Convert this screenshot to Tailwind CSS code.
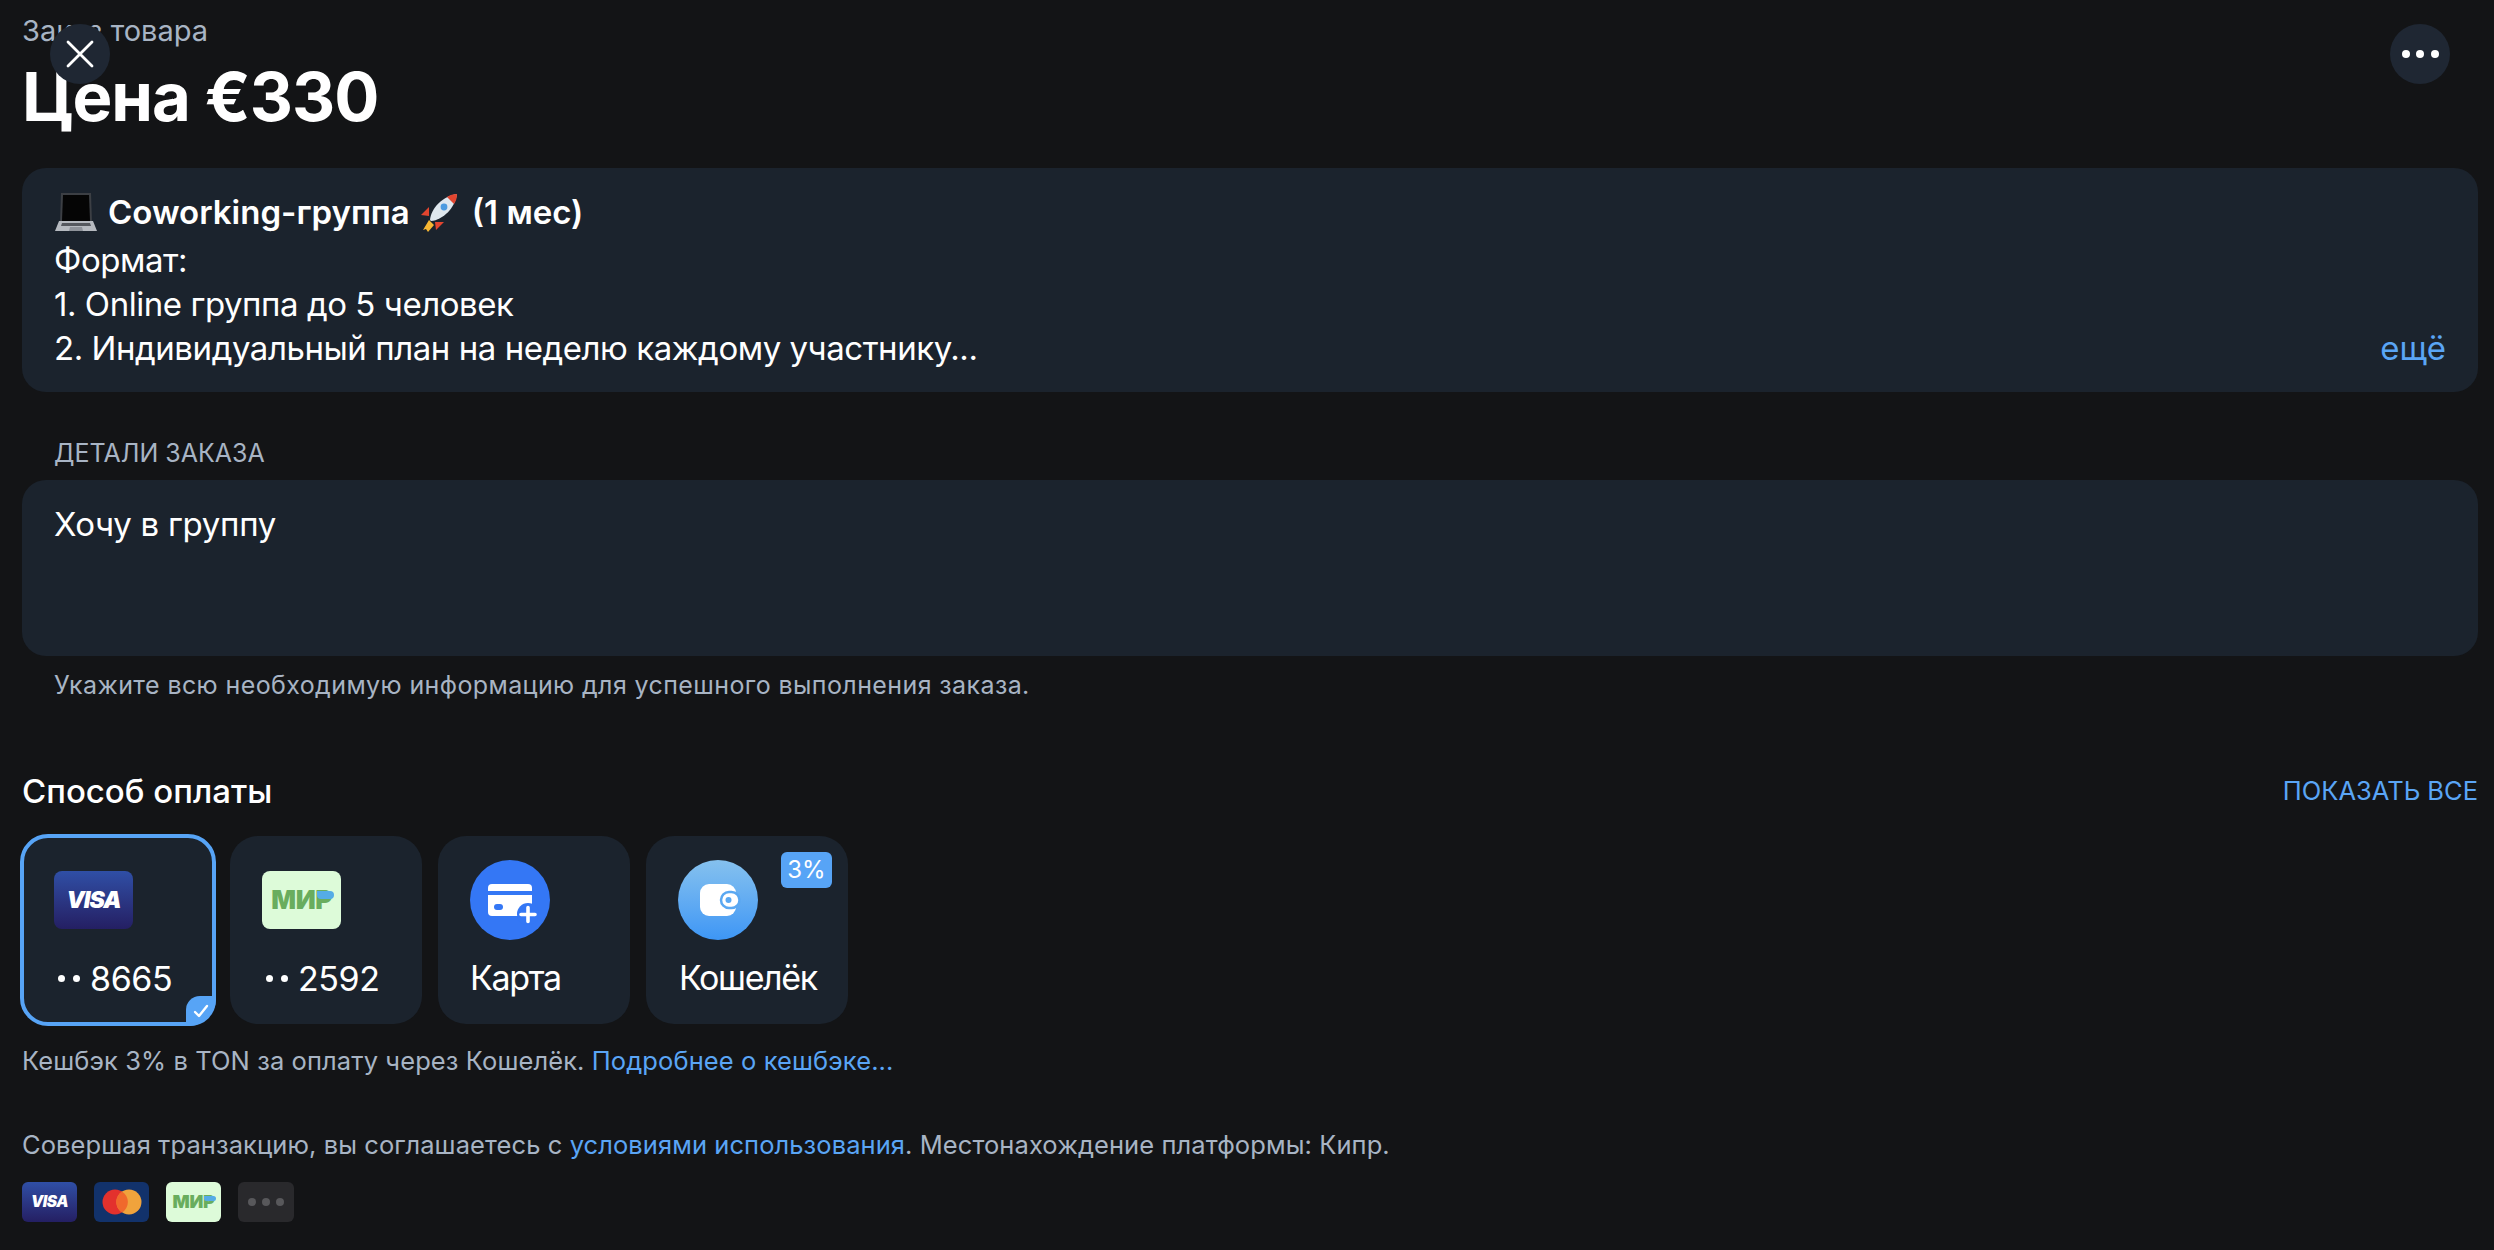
<!DOCTYPE html>
<html lang="ru">
<head>
<meta charset="utf-8">
<script src="https://cdn.jsdelivr.net/npm/@tailwindcss/browser@4"></script>
<title>Заказ товара</title>
</head>
<body class="bg-[#131416] font-['Inter','Noto_Sans',sans-serif] text-white overflow-hidden">
<div class="relative h-[1250px] w-[2494px] pl-[22px] pr-[16px]">
  <button class="absolute left-[50px] top-[24px] flex h-[60px] w-[60px] items-center justify-center rounded-full bg-[#1f2733]">
    <svg width="30" height="30" viewBox="0 0 30 30" fill="none" stroke="white" stroke-width="2.8" stroke-linecap="round"><path d="M3 3 27 27M27 3 3 27"/></svg>
  </button>
  <button class="absolute left-[2390px] top-[24px] flex h-[60px] w-[60px] items-center justify-center gap-[6.5px] rounded-full bg-[#1f2733]">
    <span class="h-[8px] w-[8px] rounded-full bg-white"></span><span class="h-[8px] w-[8px] rounded-full bg-white"></span><span class="h-[8px] w-[8px] rounded-full bg-white"></span>
  </button>

  <div class="pt-[13px] text-[29px] leading-[36px] text-[#a8b4c4]">Заказ товара</div>
  <h1 class="mt-[11px] text-[67px] leading-[74px] font-bold tracking-[-1px]">Цена €330</h1>

  <section class="mt-[34px] flex h-[224px] items-end justify-between rounded-[24px] bg-[#1b232d] px-[32px] pb-[22px] pt-[22px]">
    <div class="text-[33px] leading-[44px] tracking-[-0.45px]">
      <div class="flex h-[44px] items-center gap-[10px] font-semibold tracking-normal">
        <svg width="44" height="42" viewBox="0 0 44 42"><path d="M7 2h30l1 30H6z" fill="#3c3f44"/><path d="M9 4h26l1 26H8z" fill="#050505"/><path d="M5 30h34l4 10H1z" fill="#b6bac0"/><path d="M8 32h28l1 3H7z" fill="#55585e"/><path d="M16 36h12l1 4H15z" fill="#8f939a"/></svg>
        <span>Coworking-группа</span>
        <svg class="ml-[-2px]" width="42" height="42" viewBox="0 0 42 42"><path d="M11 29 5 39l3-1 2 3 6-7z" fill="#f7b733"/><path d="M11 16 3 24l8 1zM26 31l-8 8-1-8z" fill="#e2452f"/><path d="M12 29C13 17 25 5 39 3c-2 14-14 26-26 27z" fill="#dfe7ee"/><path d="M39 3c-4 0-7 1-10 3l7 7c2-3 3-6 3-10z" fill="#e2452f"/><circle cx="26" cy="16" r="3.4" fill="#4d9be0"/></svg>
        <span class="ml-[2px]">(1 мес)</span>
      </div>
      <div class="mt-[4px]">Формат:</div>
      <div>1. Online группа до 5 человек</div>
      <div>2. Индивидуальный план на неделю каждому участнику...</div>
    </div>
    <span class="text-[33px] leading-[44px] text-[#5aa5f5]">ещё</span>
  </section>

  <div class="mt-[43px] pl-[32px] text-[25px] leading-[36px] text-[#a8b4c4]">ДЕТАЛИ ЗАКАЗА</div>
  <section class="mt-[9px] h-[176px] rounded-[24px] bg-[#1b232d] px-[32px] pt-[22px] text-[33px] leading-[44px] tracking-[-0.3px]">Хочу в группу</section>
  <p class="mt-[12px] pl-[32px] text-[25px] leading-[34px] tracking-[0.4px] text-[#a8b4c4]">Укажите всю необходимую информацию для успешного выполнения заказа.</p>

  <div class="mt-[67px] flex items-center justify-between">
    <h2 class="text-[33px] leading-[44px] font-medium">Способ оплаты</h2>
    <span class="text-[25.500px] leading-[44px] text-[#5aa5f5]">ПОКАЗАТЬ ВСЕ</span>
  </div>

  <div class="ml-[-2px] mt-[21px] flex items-center gap-[16px]">
    <div class="relative mr-[-2px] flex h-[192px] w-[196px] shrink-0 flex-col rounded-[28px] border-[4px] border-[#57a4f6] bg-[#1b232d] pl-[30px]">
      <div class="mt-[33px] flex h-[58px] w-[79px] items-center justify-center rounded-[8px] bg-linear-to-b from-[#2f4fa6] to-[#241f63]"><span class="text-[23px] leading-none font-black italic tracking-[-1px]">VISA</span></div>
      <div class="mt-[27px] flex h-[44px] items-center text-[34px] tracking-[-0.4px]"><span class="ml-[4px] h-[7px] w-[7px] rounded-full bg-white"></span><span class="ml-[8px] h-[7px] w-[7px] rounded-full bg-white"></span><span class="ml-[10px]">8665</span></div>
      <span class="absolute bottom-[-4px] right-[-4px] flex h-[30px] w-[30px] items-center justify-center rounded-tl-[14px] rounded-br-[26px] bg-[#57a4f6]"><svg width="16" height="14" viewBox="0 0 16 14" fill="none" stroke="white" stroke-width="2.4" stroke-linecap="round" stroke-linejoin="round"><path d="m2 8 4 4 8-10"/></svg></span>
    </div>
    <div class="flex h-[188px] w-[192px] shrink-0 flex-col rounded-[28px] bg-[#1b232d] pl-[32px]">
      <div class="relative mt-[35px] flex h-[58px] w-[79px] items-center justify-center rounded-[8px] bg-[#ddfbd9]"><span class="text-[26px] leading-none font-black tracking-[-0.5px] text-[#69ad5e]">МИР</span><span class="absolute right-[7px] top-[20px] h-[8px] w-[17px] rounded-tr-[8px] rounded-br-[8px] rounded-bl-[8px] bg-[#55ace6]"></span></div>
      <div class="mt-[27px] flex h-[44px] items-center text-[34px] tracking-[-0.4px]"><span class="ml-[4px] h-[7px] w-[7px] rounded-full bg-white"></span><span class="ml-[8px] h-[7px] w-[7px] rounded-full bg-white"></span><span class="ml-[10px]">2592</span></div>
    </div>
    <div class="flex h-[188px] w-[192px] shrink-0 flex-col rounded-[28px] bg-[#1b232d] pl-[32px]">
      <svg class="mt-[24px]" width="80" height="80" viewBox="0 0 80 80"><circle cx="40" cy="40" r="40" fill="#3477f5"/><path d="M22 24h36a4 4 0 0 1 4 4v3H18v-3a4 4 0 0 1 4-4z" fill="white"/><path d="M18 35h44v21H22a4 4 0 0 1-4-4z" fill="white"/><rect x="24" y="44" width="9" height="6" rx="3" fill="#3477f5"/><circle cx="58" cy="54" r="11" fill="#3477f5"/><path d="M58 47.500v14M51 54.500h14" stroke="white" stroke-width="3.600" stroke-linecap="round"/></svg>
      <div class="mt-[16px] h-[44px] text-[34px] leading-[44px] tracking-[-1.4px]">Карта</div>
    </div>
    <div class="relative flex h-[188px] w-[202px] shrink-0 flex-col rounded-[28px] bg-[#1b232d] pl-[32px]">
      <div class="mt-[24px] h-[80px] w-[80px] rounded-full bg-linear-to-b from-[#85c1ee] to-[#3d96f5]">
        <svg width="80" height="80" viewBox="0 0 80 80"><rect x="22" y="24" width="36" height="32" rx="9" fill="white"/><rect x="43" y="32" width="18.500" height="16" rx="8" fill="white" stroke="#5aa8f2" stroke-width="2.500"/><circle cx="50.500" cy="40" r="3" fill="#5aa8f2"/></svg>
      </div>
      <div class="mt-[16px] h-[44px] pl-[1px] text-[34px] leading-[44px] tracking-[-1.4px]">Кошелёк</div>
      <span class="absolute right-[16px] top-[16px] flex h-[36px] w-[51px] items-center justify-center rounded-[6px] bg-[#57a4f6] text-[24px]">3%</span>
    </div>
  </div>

  <p class="mt-[17px] text-[25.500px] leading-[36px] tracking-[0.1px] text-[#a8b4c4]">Кешбэк 3% в TON за оплату через Кошелёк. <span class="text-[#5aa5f5]">Подробнее о кешбэке...</span></p>
  <p class="mt-[48px] text-[25.500px] leading-[36px] tracking-[0.08px] text-[#a8b4c4]">Совершая транзакцию, вы соглашаетесь с <span class="text-[#5aa5f5]">условиями использования</span>. Местонахождение платформы: Кипр.</p>

  <div class="mt-[19px] flex gap-[17px]">
    <div class="flex h-[40px] w-[55px] items-center justify-center rounded-[6px] bg-linear-to-b from-[#2f4fa6] to-[#241f63]"><span class="text-[15.500px] leading-none font-black italic tracking-[-0.5px]">VISA</span></div>
    <div class="flex h-[40px] w-[55px] items-center justify-center rounded-[6px] bg-[#12326b]">
      <svg width="40" height="26" viewBox="0 0 40 26"><circle cx="13" cy="13" r="12.500" fill="#e3312d"/><circle cx="27" cy="13" r="12.500" fill="#f0a33c"/><path d="M20 2.400a12.500 12.500 0 0 1 0 21.200 12.500 12.500 0 0 1 0-21.200z" fill="#f0692c"/></svg>
    </div>
    <div class="relative flex h-[40px] w-[55px] items-center justify-center rounded-[6px] bg-[#ddfbd9]"><span class="text-[18px] leading-none font-black tracking-[-0.3px] text-[#69ad5e]">МИР</span><span class="absolute right-[5px] top-[14px] h-[5px] w-[12px] rounded-tr-[5px] rounded-br-[5px] rounded-bl-[5px] bg-[#55ace6]"></span></div>
    <div class="flex h-[40px] w-[56px] items-center justify-center gap-[6px] rounded-[6px] bg-[#29292c]">
      <span class="h-[8px] w-[8px] rounded-full bg-[#58585b]"></span><span class="h-[8px] w-[8px] rounded-full bg-[#58585b]"></span><span class="h-[8px] w-[8px] rounded-full bg-[#58585b]"></span>
    </div>
  </div>
</div>
</body>
</html>
